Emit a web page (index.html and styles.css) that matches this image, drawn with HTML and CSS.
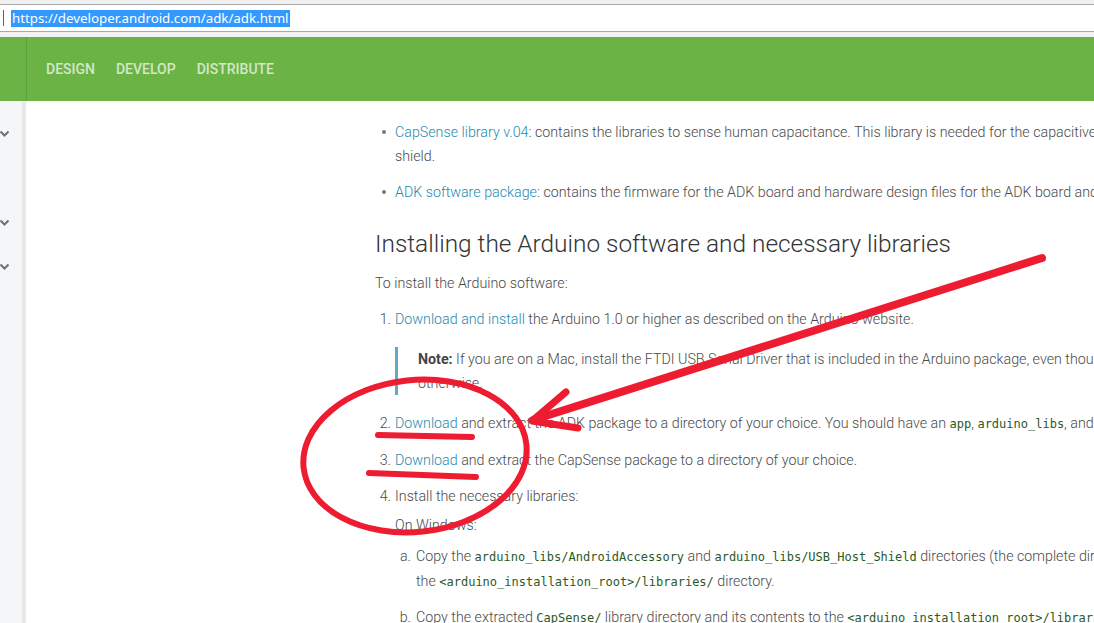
FILE: index.html
```html
<!DOCTYPE html>
<html lang="en">
<head>
<meta charset="utf-8">
<title>Accessory Development Kit</title>
<link rel="stylesheet" href="styles.css">
</head>
<body>
<div class="browser-bar">
  <div class="tab-strip"></div>
  <div class="url-row">
    <span class="caret"></span>
    <span class="url">https://developer.android.com/adk/adk.html</span>
  </div>
  <div class="bar-gap"></div>
</div>

<header class="site-header">
  <div class="header-left"></div>
  <nav class="top-nav">
    <a class="top-link">DESIGN</a>
    <a class="top-link">DEVELOP</a>
    <a class="top-link">DISTRIBUTE</a>
  </nav>
</header>

<div class="page">
  <aside class="sidebar">
    <div class="side-item"><svg class="chev" viewBox="0 0 10 7"><polyline points="1,1.5 5,5.5 9,1.5"/></svg></div>
    <div class="side-item"></div>
    <div class="side-item"><svg class="chev" viewBox="0 0 10 7"><polyline points="1,1.5 5,5.5 9,1.5"/></svg></div>
    <div class="side-item"><svg class="chev" viewBox="0 0 10 7"><polyline points="1,1.5 5,5.5 9,1.5"/></svg></div>
  </aside>

  <main class="content">
    <ul class="bullets">
      <li class="bullet-item"><span class="dot"></span><div class="text"><a class="link">CapSense library v.04</a>: contains the libraries to sense human capacitance. This library is needed for the capacitive button that is located on the ADK<br>shield.</div></li>
      <li class="bullet-item"><span class="dot"></span><div class="text"><a class="link">ADK software package</a>: contains the firmware for the ADK board and hardware design files for the ADK board and shield.</div></li>
    </ul>

    <h2 class="section-title">Installing the Arduino software and necessary libraries</h2>
    <p class="para">To install the Arduino software:</p>

    <ol class="steps">
      <li class="step"><span class="num">1.</span><div class="text"><a class="link">Download and install</a> the Arduino 1.0 or higher as described on the Arduino website.
        <div class="note"><strong>Note:</strong> If you are on a Mac, install the FTDI USB Serial Driver that is included in the Arduino package, even though the installation instructions say<br>otherwise.</div>
      </div></li>
      <li class="step"><span class="num">2.</span><div class="text"><a class="link">Download</a> and extract the ADK package to a directory of your choice. You should have an <code>app</code>, <code>arduino_libs</code>, and <code>hardware</code> directories.</div></li>
      <li class="step"><span class="num">3.</span><div class="text"><a class="link">Download</a> and extract the CapSense package to a directory of your choice.</div></li>
      <li class="step"><span class="num">4.</span><div class="text">Install the necessary libraries:
        <p class="os">On Windows:</p>
        <ol class="substeps">
          <li class="substep"><span class="subnum">a.</span><div class="text">Copy the <code>arduino_libs/AndroidAccessory</code> and <code>arduino_libs/USB_Host_Shield</code> directories (the complete directories, not just the files within) to<br>the <code>&lt;arduino_installation_root&gt;/libraries/</code> directory.</div></li>
          <li class="substep"><span class="subnum">b.</span><div class="text">Copy the extracted <code>CapSense/</code> library directory and its contents to the <code>&lt;arduino_installation_root&gt;/libraries/</code> directory.</div></li>
        </ol>
      </div></li>
    </ol>
  </main>
</div>

<svg class="markup" viewBox="0 0 1094 623" width="1094" height="623">
  <ellipse cx="415" cy="456" rx="112" ry="76" transform="rotate(-6 415 456)" stroke-width="6"/>
  <line x1="1042" y1="258" x2="533" y2="420" stroke-width="8"/>
  <polyline points="566,392 532,421 578,428" stroke-width="7"/>
  <line x1="378" y1="435" x2="472" y2="437" stroke-width="6"/>
  <line x1="369" y1="473" x2="476" y2="477" stroke-width="6"/>
</svg>
</body>
</html>
```

FILE: styles.css
```css
* { box-sizing: border-box; }

html, body {
  margin: 0;
  height: 100%;
  overflow: hidden;
}

body {
  position: relative;
  font-family: Roboto, "Noto Sans", sans-serif;
  background: #fff;
  color: #505050;
}

/* browser chrome */
.tab-strip {
  height: 5px;
  background: #f0f0f0;
  border-bottom: 1px solid #a8a8a8;
}

.url-row {
  height: 27px;
  background: #fff;
  border-bottom: 1px solid #a8a8a8;
  display: flex;
  align-items: center;
  padding-left: 3px;
}

.caret {
  width: 1px;
  height: 16px;
  background: #606060;
  margin-right: 7px;
}

.url {
  background: #3399ff;
  color: #fff;
  font-family: "Noto Sans", "Open Sans", sans-serif;
  font-size: 13.3px;
  line-height: 17px;
  padding: 0 1px;
}

.bar-gap {
  height: 5px;
  background: #f2f2f2;
}

/* site header */
.site-header {
  height: 64px;
  background: #6ab344;
  display: flex;
}

.header-left {
  width: 27px;
  border-right: 1px solid #5ea13a;
}

.top-nav {
  display: flex;
  align-items: center;
  gap: 21px;
  padding-left: 19px;
}

.top-link {
  font-family: Roboto, sans-serif;
  font-weight: 500;
  font-size: 14px;
  color: #d2e8c7;
}

/* page */
.page {
  display: flex;
  height: 522px;
}

.sidebar {
  width: 26px;
  flex: none;
  background: #f5f6f7;
  border-right: 4px solid #e6e8e9;
  padding-top: 10px;
}

.side-item {
  height: 44px;
  display: flex;
  align-items: center;
}

.side-item:first-child + .side-item + .side-item,
.side-item:last-child { padding-top: 2px; }

.chev {
  width: 11px;
  height: 7px;
  margin-left: -1px;
}

.chev polyline {
  fill: none;
  stroke: #707070;
  stroke-width: 2;
}

.content {
  flex: 1;
  min-width: 0;
  overflow: hidden;
  padding: 19px 0 0 349px;
  white-space: nowrap;
  font-size: 14.25px;
  line-height: 24px;
  font-weight: 300;
  color: #4a4a4a;
}

.link {
  color: #258aaf;
  text-decoration: none;
}

code {
  font-family: "DejaVu Sans Mono", monospace;
  font-size: 12px;
  color: #2a5a26;
}

strong { font-weight: 700; color: #444; }

.bullets {
  list-style: none;
  margin: 0;
  padding: 0;
}

.bullet-item {
  display: flex;
}

.bullet-item + .bullet-item { margin-top: 12px; }

.dot {
  flex: none;
  width: 4px;
  height: 4px;
  border-radius: 50%;
  background: #777;
  margin: 10px 9px 0 7px;
}

.section-title {
  margin: 24px 0 11px;
  font-size: 24.4px;
  line-height: 32px;
  font-weight: 300;
  color: #333;
}

.para { margin: 0; }

.steps {
  list-style: none;
  margin: 12px 0 0;
  padding: 0;
}

.step { display: flex; }
.step + .step { margin-top: 12px; }

.num {
  flex: none;
  width: 20px;
  text-align: right;
  padding-right: 4px;
}

.note {
  margin: 16px 0 4px;
  border-left: 3px solid #62a8c6;
  padding-left: 20px;
}

.os { margin: 5px 0 0; }

.substeps {
  list-style: none;
  margin: 7px 0 0;
  padding: 0;
}

.substep { display: flex; }
.substep + .substep { margin-top: 11px; }

.subnum {
  flex: none;
  width: 21px;
  text-align: right;
  padding-right: 5px;
}

/* red hand-drawn annotations over the page */
.markup {
  position: absolute;
  left: 0;
  top: 0;
  pointer-events: none;
}

.markup * {
  fill: none;
  stroke: #ee1c31;
  stroke-linecap: round;
  stroke-linejoin: round;
}
```
